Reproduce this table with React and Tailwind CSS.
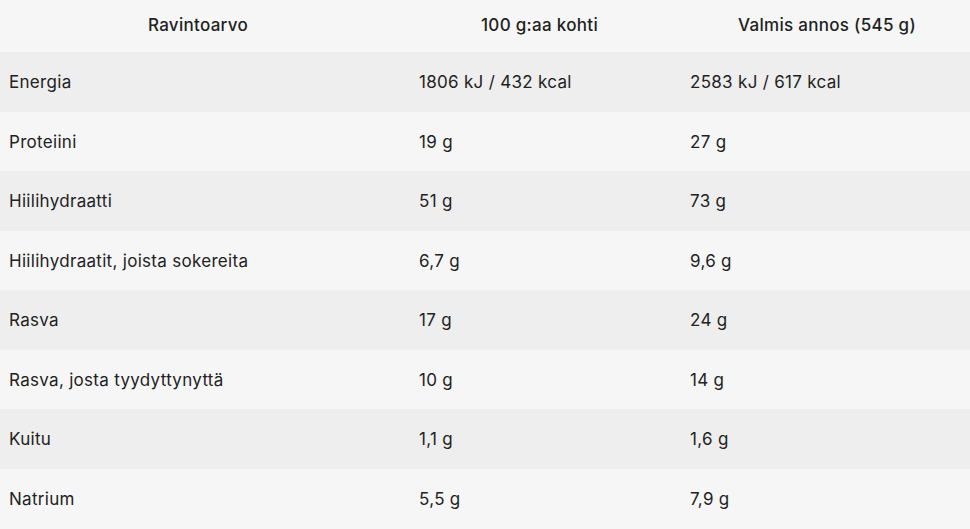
import React from "react";

const rows = [
  ["Energia", "1806 kJ / 432 kcal", "2583 kJ / 617 kcal"],
  ["Proteiini", "19 g", "27 g"],
  ["Hiilihydraatti", "51 g", "73 g"],
  ["Hiilihydraatit, joista sokereita", "6,7 g", "9,6 g"],
  ["Rasva", "17 g", "24 g"],
  ["Rasva, josta tyydyttynyttä", "10 g", "14 g"],
  ["Kuitu", "1,1 g", "1,6 g"],
  ["Natrium", "5,5 g", "7,9 g"],
];

export default function App() {
  return (
    <div
      className="w-[970px] h-[529px] bg-[#f6f6f6] text-[#222] text-[17px] tracking-[0.3px] overflow-hidden"
      style={{ fontFamily: "Inter, 'Noto Sans', sans-serif" }}
    >
      <div className="grid grid-cols-[410px_271px_289px] h-[52px] items-center font-medium">
        <div className="text-center pr-[14px]">Ravintoarvo</div>
        <div className="text-center pr-[12px]">100 g:aa kohti</div>
        <div className="text-center pl-[3px]">Valmis annos (545 g)</div>
      </div>
      {rows.map((r, i) => (
        <div
          key={r[0]}
          className={
            "grid grid-cols-[410px_271px_289px] h-[59.5px] items-center pt-[2px] " +
            (i % 2 === 0 ? "bg-[#eeeeee]" : "bg-[#f6f6f6]")
          }
        >
          <div className="pl-[9px]">{r[0]}</div>
          <div className="pl-[9px]">{r[1]}</div>
          <div className="pl-[9px]">{r[2]}</div>
        </div>
      ))}
    </div>
  );
}
